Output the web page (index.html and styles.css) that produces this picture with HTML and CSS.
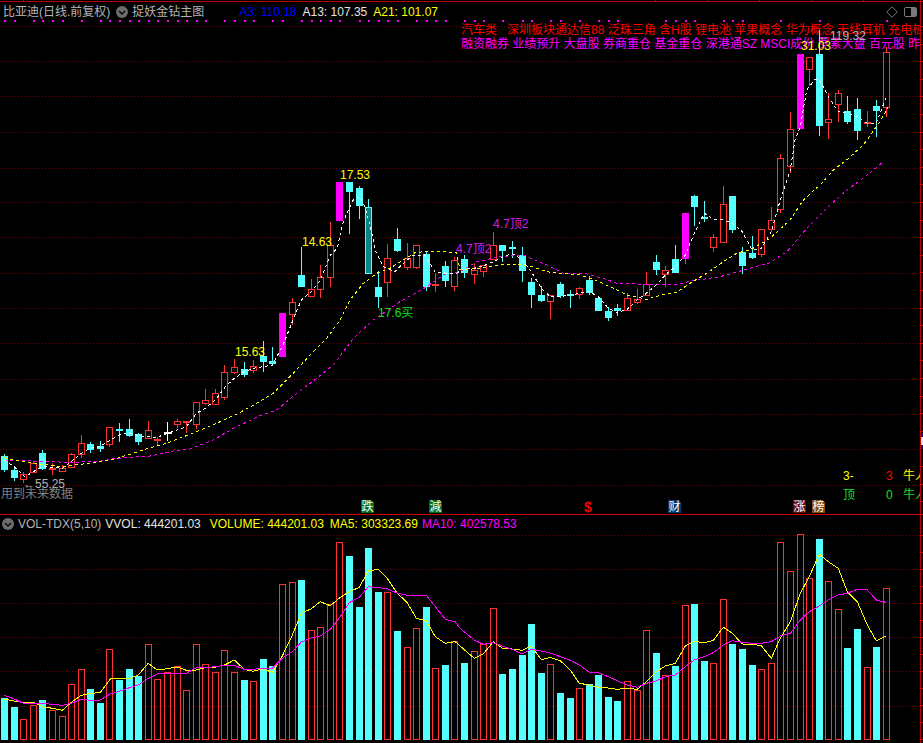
FILE: index.html
```html
<!DOCTYPE html>
<html lang="zh-CN">
<head>
<meta charset="utf-8">
<title>比亚迪 日线</title>
<link rel="stylesheet" href="styles.css">
</head>
<body>
<main class="terminal">
  <section class="pane price-pane">
    <header class="pane-header">
      <span class="title">比亚迪(日线.前复权)</span>
      <svg class="chip" viewBox="0 0 12 12"><circle cx="6" cy="6" r="6"/><path d="M3 5l3 3 3-3"/></svg>
      <span class="title formula">捉妖金钻主图</span>
      <span class="c-blue v-first">A3: 110.18</span>
      <span class="c-white">A13: 107.35</span>
      <span class="c-yellow">A21: 101.07</span>
    </header>
    <div class="concepts">
      <div class="concept-row c-red">汽车类   深圳板块通达信88 泛珠三角 含H股 锂电池 苹果概念 华为概念 无线耳机 充电桩</div>
      <div class="concept-row c-magenta">融资融券 业绩预升 大盘股 券商重仓 基金重仓 深港通SZ MSCI成份 罗素大盘 百元股 昨日</div>
    </div>
    <div class="window-tools">
      <svg class="tool" viewBox="0 0 12 12"><path class="tool-line" d="M6 .7L11.3 6 6 11.3.7 6z"/></svg>
      <svg class="tool tool-wide" viewBox="0 0 13 12"><rect class="tool-line" x=".5" y="1.5" width="12" height="9" rx="1.5"/><rect class="tool-fill" x="7" y="2" width="5" height="8"/></svg>
    </div>
    <svg class="canvas" id="price-chart" viewBox="0 0 923 514">
      <defs><clipPath id="plot-clip"><rect x="0" y="0" width="920" height="514"/></clipPath></defs>
      <g id="price-grid"></g>
      <g id="marks"></g>
      <g id="candles"></g>
      <g id="price-lines"></g>
      <g clip-path="url(#plot-clip)">
        <text class="label c-yellow" x="340" y="179">17.53</text>
        <text class="label c-yellow" x="302" y="246">14.63</text>
        <text class="label c-yellow" x="235" y="356">15.63</text>
        <text class="label c-yellow" x="801" y="50">31.03</text>
        <text class="label c-gray" x="818" y="40">←119.32</text>
        <text class="label c-gray" x="23" y="488">←55.25</text>
        <text class="label c-dim" x="1" y="498">用到未来数据</text>
        <text class="label c-green" x="378" y="317">17.6买</text>
        <text class="label c-purple" x="493" y="228">4.7顶2</text>
        <text class="label c-purple" x="456" y="253">4.7顶2</text>
        <text class="label c-yellow" x="843" y="480">3-</text>
        <text class="label c-red" x="886" y="480">3</text>
        <text class="label c-yellow" x="903" y="480">牛人</text>
        <text class="label c-green" x="843" y="499">顶</text>
        <text class="label c-green" x="886" y="499">0</text>
        <text class="label c-green" x="903" y="499">牛人</text>
      </g>
      <g class="badge">
        <polygon class="b-green" points="361,500 371,500 374,503 374,513 361,513"/><text x="361.500" y="511">跌</text>
        <polygon class="b-green" points="429,500 439,500 442,503 442,513 429,513"/><text x="429.500" y="511">減</text>
        <text class="badge-dollar" x="584" y="512">$</text>
        <polygon class="b-blue" points="668,500 678,500 681,503 681,513 668,513"/><text x="668.500" y="511">财</text>
        <polygon class="b-red" points="793,500 803,500 806,503 806,513 793,513"/><text x="793.500" y="511">涨</text>
        <polygon class="b-brown" points="812,500 822,500 825,503 825,513 812,513"/><text x="812.500" y="511">榜</text>
      </g>
      <rect class="marker-blue" x="921" y="433" width="2" height="16"/>
      <rect class="marker-white" x="921" y="437" width="2" height="8"/>
    </svg>
  </section>
  <section class="pane volume-pane">
    <header class="pane-header vol-header">
      <svg class="chip" viewBox="0 0 12 12"><circle cx="6" cy="6" r="6"/><path d="M3 5l3 3 3-3"/></svg>
      <span class="title">VOL-TDX(5,10)</span>
      <span class="c-white">VVOL: 444201.03</span>
      <span class="c-yellow v-volume">VOLUME: 444201.03</span>
      <span class="c-yellow">MA5: 303323.69</span>
      <span class="c-magenta v-ma10">MA10: 402578.53</span>
    </header>
    <svg class="canvas" id="volume-chart" viewBox="0 515 923 228">
      <g id="volume-grid"></g>
      <g id="volume-bars"></g>
      <g id="volume-lines"></g>
    </svg>
  </section>
</main>
<script src="chart.js"></script>
</body>
</html>
```

FILE: styles.css
```css
html, body {
  margin: 0;
  background: #000;
}
.terminal {
  width: 923px;
  height: 743px;
  overflow: hidden;
  background: #000;
  font: 12px/14px "Liberation Sans", "Noto Sans CJK SC", sans-serif;
}
.pane { position: relative; }
.price-pane {
  height: 514px;
  border-bottom: 1px solid #d00000;
}
.volume-pane { height: 228px; }
.canvas {
  position: absolute;
  left: 0;
  top: 0;
  width: 923px;
  height: 100%;
  shape-rendering: crispEdges;
}
.pane-header {
  display: flex;
  align-items: center;
  gap: 6px;
  height: 23px;
  padding-left: 3px;
  white-space: pre;
}
.title { color: #b4b4b4; }
.formula { margin-left: -2px; }
.chip { width: 12px; height: 12px; flex: none; }
.chip circle { fill: #6c6c6c; }
.chip path { fill: none; stroke: #0c0c0c; stroke-width: 1.5; }
.v-first { margin-left: 29px; }
.vol-header {
  height: 15px;
  padding-left: 2px;
  padding-top: 1px;
  gap: 6px;
}
.vol-header .chip { margin-right: -2px; }
.vol-header .title { margin-right: -2px; }
.v-volume { margin-left: 3px; }
.v-ma10 { margin-left: -2px; }
.concepts {
  width: 459px;
  margin-left: 461px;
  overflow: hidden;
}
.concept-row { white-space: pre; }
.window-tools {
  position: absolute;
  top: 6px;
  left: 886px;
  display: flex;
  align-items: center;
  gap: 6px;
}
.tool { width: 12px; height: 12px; }
.tool-wide { width: 13px; }
.tool-line { fill: none; stroke: #7a7a7a; stroke-width: 1; }
.tool-fill { fill: #7a7a7a; }
.c-blue { color: #0000ff; fill: #0000ff; }
.c-white { color: #e4e4e4; fill: #e4e4e4; }
.c-yellow { color: #ffff00; fill: #ffff00; }
.c-red { color: #ff0000; fill: #ff0000; }
.c-magenta { color: #ff00ff; fill: #ff00ff; }
.c-purple { fill: #d21ee6; }
.c-green { fill: #10e020; }
.c-gray { fill: #b4b4b4; }
.c-dim { fill: #808080; }
.label {
  font: 12px "Liberation Sans", "Noto Sans CJK SC", sans-serif;
}
.badge text {
  font: 12px "Liberation Sans", "Noto Sans CJK SC", sans-serif;
  fill: #fff;
}
.badge .badge-dollar {
  font: bold 14px "Liberation Sans", sans-serif;
  fill: #f00000;
}
.b-green { fill: #006e10; }
.b-blue { fill: #00386c; }
.b-red { fill: #700808; }
.b-brown { fill: #864a08; }
.marker-blue { fill: #10108a; }
.marker-white { fill: #d8dcf8; }
.grid { stroke: #7a0000; stroke-width: 1; stroke-dasharray: 1 2; fill: none; }
.axis { stroke: #c00000; stroke-width: 1; fill: none; }
.mark { fill: #ff00ff; }
.up { fill: none; stroke: #ff3232; stroke-width: 1; }
.down { fill: #54ffff; }
.wick-down { fill: none; stroke: #54ffff; stroke-width: 1; }
.hot { fill: #ff00ff; }
.teal { fill: #0b8686; stroke: #54ffff; stroke-width: 1; }
.wick-flat { fill: none; stroke: #ffffff; stroke-width: 1; }
.avg { fill: none; stroke-width: 1; stroke-dasharray: 3 3; }
.avg-white { stroke: #ffffff; }
.avg-yellow { stroke: #ffff00; }
.avg-magenta { stroke: #ff00ff; }
.ma { fill: none; stroke-width: 1; }
.ma-yellow { stroke: #ffff00; }
.ma-magenta { stroke: #ff00ff; }
```

FILE: chart.js
```js
var STEP = 9.585;
function left(i) { return Math.round(1 + STEP * i); }

/* kind: R up (hollow), C down (cyan), M limit-up (magenta), T teal, W flat
   [kind, bodyTop, bodyBottom, wickTop, wickBottom] */
var CANDLES = [
  ["C",456,470,454,472],["C",470,478,466,481],["R",474,479,472,483],["R",463,472,461,472],
  ["C",453,469,450,470],["R",468,469,463,475],["R",468,471,465,472],["R",454,467,453,467],
  ["R",443,454,435,458],["C",444,450,442,453],["C",446,449,441,452],["R",427,444,427,447],
  ["C",429,430,423,442],["C",429,436,419,437],["C",434,442,433,445],["R",430,438,421,439],
  ["R",439,440,437,445],["W",432,433,422,441],["R",421,424,419,428],["R",421,422,421,433],
  ["R",402,424,402,429],["R",400,403,389,405],["R",393,404,389,405],["R",372,397,365,400],
  ["R",367,372,359,374],["C",369,375,362,377],["R",366,370,360,373],["C",356,362,341,372],
  ["C",361,364,347,366],["M",313,357,313,357],["R",302,314,298,325],["C",275,287,247,287],
  ["R",289,296,279,296],["R",277,289,265,298],["R",245,277,222,287],["M",182,221,182,221],
  ["C",182,192,182,234],["C",188,206,186,219],["T",207,273,199,273],["C",287,297,271,308],
  ["R",258,282,244,297],["C",239,251,228,252],["R",258,267,243,270],["R",245,267,245,269],
  ["C",254,287,252,291],["R",284,285,273,292],["C",266,281,261,287],["R",260,286,257,291],
  ["C",259,273,255,278],["R",270,274,263,284],["R",265,271,265,277],["R",245,259,232,259],
  ["C",245,251,245,262],["C",247,248,241,258],["C",255,271,247,282],["C",282,295,278,308],
  ["C",295,301,286,302],["R",295,301,295,319],["C",284,296,282,298],["C",294,295,290,308],
  ["R",288,294,287,299],["C",280,293,276,295],["C",298,311,298,311],["C",311,318,307,321],
  ["C",308,311,304,316],["R",298,310,293,311],["R",299,302,289,304],["R",284,295,272,295],
  ["C",262,270,255,275],["R",270,274,266,287],["C",259,273,245,273],["M",213,259,213,264],
  ["C",196,207,195,226],["C",217,219,201,222],["R",237,247,234,252],["R",204,242,186,242],
  ["C",196,230,196,233],["C",252,266,247,274],["C",253,258,236,259],["R",229,254,229,257],
  ["R",220,229,207,232],["R",158,209,154,213],["R",129,166,112,173],["M",54,129,54,129],
  ["R",57,69,57,86],["C",54,126,30,136],["R",119,122,93,139],["R",93,104,90,122],
  ["C",111,122,96,124],["C",109,131,98,140],["R",122,123,111,127],["C",106,111,100,137],
  ["R",52,107,47,117]
];

var VOLUMES = [
  "C564","C591","R628","R586","C570","R600","R619","R523","R478","C537","C579","R418",
  "C510","C477","C498","R403","R508","R487","R468","R541","R403","R463","R487","R421",
  "R487","C510","R514","C447","C468","R223","R217","C210","R361","R352","R283","R97",
  "C138","C291","C114","C246","R247","C363","R412","R355","C291","R475","C465","R394",
  "C459","R424","R402","R295","C492","C477","C435","C342","C489","R463","C549","C564",
  "R535","C522","C495","C561","C573","R514","R541","R361","C429","R496","C468","R286",
  "C282","C453","R460","R268","C402","C417","C465","R478","R460","R97","R184","R73",
  "R205","C87","R214","R298","C414","C357","R472","C411","R235"
];

var MARKS = [0,1,3,4,5,6,8,10,11,12,13,14,15,16,17,18,19,20,21,23,24,25,26,28,29,31,32,33,34,35,
  37,38,39,40,41,43,44,45,46,48,49,50,52,54,55,57,58,60,62,63,64,69,70,71,72,75,76,77,81,85,92];

/* Polylines measured as [x0, y0, x, y, x, y, ...] at 3x scale */
function seg(x0, y0, values) {
  var out = [];
  for (var i = 0; i < values.length; i += 2) {
    out.push((x0 + values[i] / 3).toFixed(1) + "," + (y0 + values[i + 1] / 3).toFixed(1));
  }
  return out;
}

var WHITE = [].concat(
  seg(0,250,[13,630,43,650,75,680,100,665,127,650,157,652,187,655,214,635,244,610,271,595,300,590,331,570,358,555,388,548,415,558,445,560,472,562,502,550,532,540,559,530,589,490,616,475,646,450,676,410,703,385,733,365,760,355,790,350,817,345,847,290,877,215,904,150,934,125,961,90,991,15]),
  seg(0,0,[1012,745,1025,680,1040,640,1060,600,1080,590,1095,620,1118,710,1125,750]),
  seg(0,250,[1130,10,1150,50,1185,65,1205,45,1240,15,1275,15,1305,65,1340,70,1370,70]),
  seg(460,250,[13,55,43,55,70,48,100,35,127,22,157,10,187,30,214,65,244,115,271,140,301,140,331,135,358,130,388,125,415,140,445,175,472,188,502,178,532,150,559,130,589,105,616,75,646,50,676,15]),
  seg(460,0,[690,730,710,685,733,640,760,658,790,660,817,670,847,695,877,750,904,745,934,695,961,600,991,510,1005,420,1021,380,1040,270,1065,238,1078,238,1105,290,1135,335,1162,340,1192,350,1222,370,1249,370,1279,290])
);

var YELLOW = [].concat(
  seg(0,250,[13,622,30,628,100,640,187,650,300,635,340,628,400,610,445,595,500,580,590,545,650,520,715,490,770,460,820,430,880,370,930,315,980,265,1020,210,1050,150,1090,100,1130,70,1170,55,1210,30,1245,8,1290,3,1370,8]),
  seg(460,250,[0,60,60,55,130,42,170,42,215,50,260,65,300,70,360,75,400,88,450,110,500,135,560,148,610,133,650,127,690,100,740,70,790,35,830,10,860,0]),
  seg(460,0,[870,750,930,715,990,660,1030,600,1080,555,1120,510,1160,480,1210,435,1260,365,1285,320])
);

var MAGENTA = [].concat(
  seg(0,250,[13,630,70,632,200,637,290,635,350,625,450,618,520,603,570,597,640,570,700,535,780,497,830,480,890,430,950,385,1000,345,1060,265,1120,210,1200,155,1280,110,1330,75,1380,65]),
  seg(460,250,[0,65,50,35,120,20,190,15,260,45,310,70,380,72,430,85,470,100,560,103,650,103,700,92,780,80,860,58,930,38,980,5]),
  seg(460,0,[990,745,1040,685,1100,625,1160,570,1210,535,1268,487])
);

var MA5 = [].concat(
  seg(0,510,[13,567,43,573,70,578,100,577,127,590,157,595,187,601,214,577,244,556,271,550,300,548,331,507,358,506,388,506,415,495,445,460,472,480,502,476,532,471,559,481,589,480,616,473,646,472,676,464,703,450,733,478,760,484,790,476,817,488,847,438,877,375,904,310,934,296,961,275,991,287,1021,262,1048,245,1078,232,1105,183,1135,178,1162,205,1192,250,1222,278,1249,325,1279,332,1306,380,1336,400,1366,395]),
  seg(460,510,[0,408,43,445,70,432,100,395,127,414,157,417,187,421,214,408,244,449,271,442,301,452,331,480,358,520,388,525,415,532,445,534,472,538,502,535,532,538,559,515,589,485,616,468,646,460,676,408,703,394,733,398,760,391,790,352,817,370,847,402,877,403,904,407,934,445,961,385,991,335,1021,250,1048,200,1078,132,1105,155,1135,175,1162,245,1192,275,1222,345,1249,392,1277,379])
);

var MA10 = [].concat(
  seg(0,510,[13,556,43,567,70,580,100,580,127,580,157,583,187,586,214,580,244,568,271,571,300,570,331,552,358,544,388,533,415,525,445,505,472,492,502,490,532,490,559,490,589,473,616,473,646,470,676,466,703,466,733,478,760,478,790,475,817,475,847,445,877,425,904,396,934,384,961,378,991,358,1021,320,1048,278,1078,262,1105,230,1135,233,1162,236,1192,250,1222,256,1249,256,1279,256,1306,290,1336,328,1366,335]),
  seg(460,510,[0,355,43,390,70,403,100,398,127,408,157,418,187,432,214,418,244,423,271,429,301,440,331,451,358,465,388,487,415,488,445,500,472,512,502,525,532,532,559,520,589,513,616,500,646,495,676,470,703,450,733,440,760,428,790,405,817,392,847,397,877,400,904,400,934,395,961,378,991,370,1021,330,1048,305,1078,288,1105,270,1135,255,1162,250,1192,238,1222,240,1249,270,1277,277])
);

function line(x1, y1, x2, y2, cls) {
  return '<line class="' + cls + '" x1="' + x1 + '" y1="' + y1 + '" x2="' + x2 + '" y2="' + y2 + '"/>';
}
function rect(x, y, w, h, cls) {
  return '<rect class="' + cls + '" x="' + x + '" y="' + y + '" width="' + w + '" height="' + h + '"/>';
}
function poly(points, cls) {
  return '<polyline class="' + cls + '" points="' + points.join(" ") + '"/>';
}
function fill(id, html) { document.getElementById(id).innerHTML = html; }

function drawGrid() {
  var main = "", vol = "", y;
  [26,61,96,132,168,202,237,273,308,343,379,414,449,485].forEach(function (v) {
    main += line(0, v + .5, 920, v + .5, "grid");
  });
  main += line(0, 1.5, 923, 1.5, "axis") + line(920.5, 0, 920.5, 514, "axis");
  [23,655,707,759,811,863,915].forEach(function (x) {
    main += line(x + .5, 0, x + .5, 2, "axis");
  });
  for (y = 26; y < 510; y += 17.6) {
    main += line(920, Math.round(y) + .5, 923, Math.round(y) + .5, "axis");
  }
  fill("price-grid", main);

  [535,569,603,637,671,706].forEach(function (v) {
    vol += line(0, v + .5, 920, v + .5, "grid");
  });
  vol += line(920.5, 515, 920.5, 743, "axis");
  for (y = 535; y < 743; y += 17) {
    vol += line(920, Math.round(y) + .5, 923, Math.round(y) + .5, "axis");
  }
  fill("volume-grid", vol);
}

function drawMarks() {
  fill("marks", MARKS.map(function (i) { return rect(left(i) + 3, 20, 2, 2, "mark"); }).join(""));
}

function drawCandles() {
  var html = "";
  CANDLES.forEach(function (c, i) {
    var kind = c[0], top = c[1], bot = c[2], wt = c[3], wb = c[4];
    var x = left(i), cx = x + 3.5;
    if (kind === "R") {
      if (wt < top) html += line(cx, wt, cx, top, "up");
      if (wb > bot) html += line(cx, bot, cx, wb, "up");
      html += rect(x + .5, top + .5, 6, Math.max(bot - top, 1), "up");
    } else if (kind === "C") {
      html += line(cx, wt, cx, wb, "wick-down") + rect(x, top, 7, Math.max(bot - top, 2), "down");
    } else if (kind === "M") {
      if (wb > bot) html += line(cx, bot, cx, wb, "up");
      html += rect(x, top, 7, bot - top, "hot");
    } else if (kind === "T") {
      html += line(cx, wt, cx, top, "wick-down") + rect(x + .5, top + .5, 6, bot - top, "teal");
    } else {
      html += line(cx, wt, cx, wb, "wick-flat") + rect(x, top, 7, 1, "wick-flat");
    }
  });
  fill("candles", html);
}

function drawVolumes() {
  var base = 740, html = "";
  VOLUMES.forEach(function (v, i) {
    var y = Math.round(510 + Number(v.slice(1)) / 3), x = left(i);
    html += v[0] === "R"
      ? rect(x + .5, y + .5, 6, base - y - 1, "up")
      : rect(x, y, 7, base - y, "down");
  });
  fill("volume-bars", html);
}

drawGrid();
drawMarks();
drawCandles();
drawVolumes();
fill("price-lines", poly(MAGENTA, "avg avg-magenta") + poly(YELLOW, "avg avg-yellow") + poly(WHITE, "avg avg-white"));
fill("volume-lines", poly(MA5, "ma ma-yellow") + poly(MA10, "ma ma-magenta"));
```
